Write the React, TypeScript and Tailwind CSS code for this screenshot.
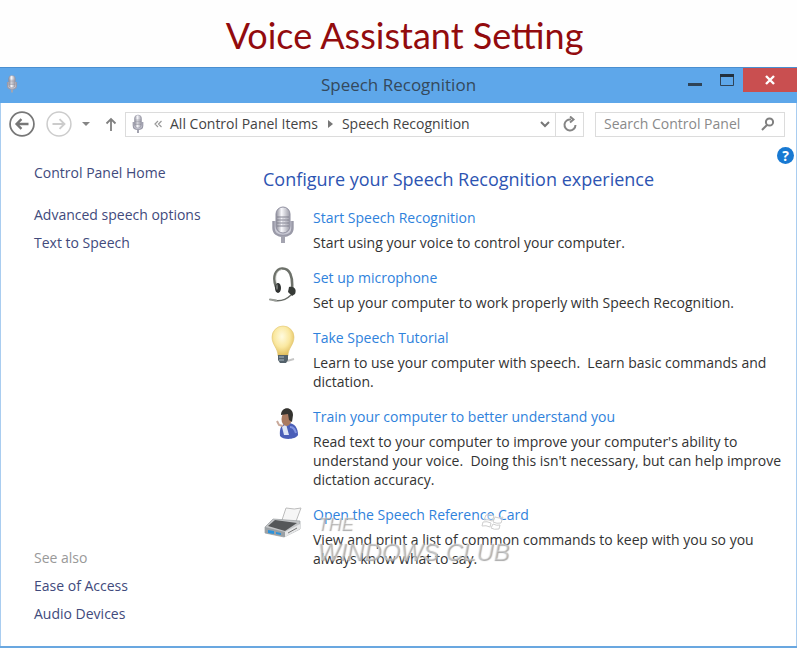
import type { ReactNode } from "react";

function MicIcon({ className }: { className: string }) {
  return (
    <svg className={className} viewBox="0 0 24 38" aria-hidden="true">
      <defs>
        <linearGradient id="micBody" x1="0" x2="1">
          <stop offset="0" stopColor="#8c8c98" />
          <stop offset="0.4" stopColor="#f8f8fc" />
          <stop offset="1" stopColor="#9a9aa6" />
        </linearGradient>
      </defs>
      <path d="M2.500 15v7c0 5 4 8 9.500 8s9.500-3 9.500-8v-7" fill="#c9c9d4" stroke="#9a9aa8" strokeWidth="2.400" />
      <path d="M12 30v7" stroke="#a4a4b0" strokeWidth="4" />
      <rect x="5" y="1" width="14" height="26" rx="7" fill="url(#micBody)" stroke="#9090a0" />
      <path d="M6 11h12M6 14h12M6 17h12M6 20h12" stroke="#80808e" strokeWidth="1" />
      <path d="M9 11v10M12 11v10M15 11v10" stroke="#b0b0bc" strokeWidth="0.6" />
    </svg>
  );
}

function HeadsetIcon() {
  return (
    <svg className="h-9 w-7" viewBox="0 0 28 36" aria-hidden="true">
      <path d="M7 20C3 9 7 2 13 1.500c8-.5 11 8 10 21" fill="none" stroke="#6d716a" strokeWidth="2.600" />
      <path d="M8 18C5 9 8 3 13 2.500" fill="none" stroke="#c9cbc5" strokeWidth="0.800" />
      <ellipse cx="9" cy="21" rx="3" ry="5" fill="#2f3231" />
      <ellipse cx="8" cy="20" rx="1" ry="3" fill="#777b77" />
      <path d="M20 20c5-1 8 2 6 7l-3 2-4-4z" fill="#363a37" />
      <path d="M22 28c-5 5-11 7-19 5" fill="none" stroke="#676b66" strokeWidth="1.400" />
      <path d="M1 32.500l6 1" stroke="#9b9e99" strokeWidth="2" strokeLinecap="round" />
    </svg>
  );
}

function BulbIcon() {
  return (
    <svg className="h-10 w-7" viewBox="0 0 28 40" aria-hidden="true">
      <defs>
        <radialGradient id="bulbGlass" cx="0.45" cy="0.35" r="0.65">
          <stop offset="0" stopColor="#fffbe0" />
          <stop offset="0.55" stopColor="#fae8a0" />
          <stop offset="1" stopColor="#dfbb59" />
        </radialGradient>
      </defs>
      <path d="M18 36l7-2" stroke="#c5c5c5" strokeWidth="2" />
      <path d="M9 31C9 23 3 20 3 12a11 11 0 0 1 22 0c0 8-6 11-6 19z" fill="url(#bulbGlass)" stroke="#e3c66f" strokeWidth="0.6" />
      <path d="M9 30h10v5l-2 3h-6l-2-3z" fill="#53616a" />
      <path d="M10 32h5M10 35h5" stroke="#a9b8c2" />
    </svg>
  );
}

function PersonIcon() {
  return (
    <svg className="ml-2 h-8 w-6" viewBox="0 0 24 32" aria-hidden="true">
      <path d="M5 28c-1-8 2-13 8-13 7 0 10 5 10 12-3 5-15 5-18 1z" fill="#4b5fb8" />
      <path d="M7 19l4-3 3 11H9z" fill="#dde5f5" />
      <path d="M15 19c4 0 5 3 6 6" stroke="#8294e0" strokeWidth="2" fill="none" />
      <ellipse cx="11.500" cy="11" rx="5" ry="7" fill="#a97a60" />
      <path d="M6 7c0-9 12-9 12 0l-1 7-3-2-1-6z" fill="#34332f" />
      <path d="M2 13l2 4 4 1" stroke="#c9a99a" strokeWidth="2" fill="none" />
    </svg>
  );
}

function PrinterIcon() {
  return (
    <svg className="h-8 w-10" viewBox="0 0 40 32" aria-hidden="true">
      <path d="M19 14L23 2q9 2 15 0l-6 16z" fill="#f6f6f6" stroke="#bcbcbc" />
      <path d="M2 21L10 13l27 2v8l-16 8L2 27z" fill="#c4c6c8" stroke="#9a9da0" strokeWidth="0.7" />
      <path d="M5 20l7-6 22 3-12 8z" fill="#555759" />
      <path d="M2 21l20 5v5L2 27z" fill="#9ba0a4" />
      <path d="M5 24l6 1v3l-6-1zM13 26l5 1v2l-5-1z" fill="#2b92db" />
      <path d="M22 26l15-8v5l-15 8z" fill="#e6e7e8" />
      <path d="M25 27l9-5" stroke="#777" />
    </svg>
  );
}

type Task = { title: string; text: string; icon: ReactNode };

const tasks: Task[] = [
  {
    title: "Start Speech Recognition",
    text: "Start using your voice to control your computer.",
    icon: <MicIcon className="h-[38px] w-6" />,
  },
  {
    title: "Set up microphone",
    text: "Set up your computer to work properly with Speech Recognition.",
    icon: <HeadsetIcon />,
  },
  {
    title: "Take Speech Tutorial",
    text: "Learn to use your computer with speech.\u00a0 Learn basic commands and dictation.",
    icon: <BulbIcon />,
  },
  {
    title: "Train your computer to better understand you",
    text: "Read text to your computer to improve your computer's ability to understand your voice.\u00a0 Doing this isn't necessary, but can help improve dictation accuracy.",
    icon: <PersonIcon />,
  },
  {
    title: "Open the Speech Reference Card",
    text: "View and print a list of common commands to keep with you so you always know what to say.",
    icon: <PrinterIcon />,
  },
];

function TitleBar() {
  return (
    <header className="grid h-9 grid-cols-[1fr_auto_1fr] border-t border-[#4a8fd0] bg-[#5ea7ea]">
      <div className="px-1.5 pt-[7px]">
        <MicIcon className="h-[18px] w-3" />
      </div>
      <h2 className="text-[17px] leading-[34px] text-[#34495c]">Speech Recognition</h2>
      <div className="flex items-start justify-end">
        <button aria-label="Minimize" className="flex h-6 w-8 items-center justify-center">
          <svg className="h-3 w-3.5" viewBox="0 0 14 12" aria-hidden="true">
            <path d="M0 10.500h14" stroke="#2f4357" strokeWidth="3" />
          </svg>
        </button>
        <button aria-label="Maximize" className="flex h-6 w-8 items-center justify-center">
          <svg className="h-3 w-3.5" viewBox="0 0 14 12" aria-hidden="true">
            <path d="M.5.500h13v11H.5z" fill="none" stroke="#2f4357" />
            <path d="M0 1.500h14" stroke="#22303e" strokeWidth="3" />
          </svg>
        </button>
        <button aria-label="Close" className="flex h-6 w-[54px] items-center justify-center bg-[#c94f50]">
          <svg className="h-2.5 w-2.5" viewBox="0 0 10 10" aria-hidden="true">
            <path d="M1 1l8 8M9 1l-8 8" stroke="#fff" strokeWidth="2.400" />
          </svg>
        </button>
      </div>
    </header>
  );
}

function Toolbar() {
  return (
    <nav aria-label="Location" className="flex items-center pt-2 pr-[11px] pl-2 text-sm text-[#444]">
      <button aria-label="Back">
        <svg className="size-[26px]" viewBox="0 0 24 24" fill="none" stroke="#777" aria-hidden="true">
          <circle cx="12" cy="12" r="11" strokeWidth="1.600" />
          <path d="M18 12H7M11.500 7.500L7 12l4.500 4.500" strokeWidth="2.200" />
        </svg>
      </button>
      <button aria-label="Forward" className="ml-[11px]">
        <svg className="size-[26px]" viewBox="0 0 24 24" fill="none" stroke="#ccc" aria-hidden="true">
          <circle cx="12" cy="12" r="11" strokeWidth="1.400" />
          <path d="M6 12h11M12.500 7.500L17 12l-4.500 4.500" strokeWidth="1.800" />
        </svg>
      </button>
      <button aria-label="Recent locations" className="ml-2.5">
        <svg className="h-2 w-2" viewBox="0 0 8 8" aria-hidden="true">
          <path d="M0 2h8L4 6z" fill="#858585" />
        </svg>
      </button>
      <button aria-label="Up" className="ml-[15px]">
        <svg className="h-4 w-3" viewBox="0 0 12 16" fill="none" stroke="#808080" strokeWidth="1.800" aria-hidden="true">
          <path d="M6 15V3M1.500 7.500L6 3l4.500 4.500" />
        </svg>
      </button>
      <div className="ml-2 flex h-[25px] min-w-0 flex-1 items-center border border-[#dcdcdc]">
        <MicIcon className="ml-1.5 h-5 w-3 shrink-0" />
        <svg className="ml-2.5 h-2 w-2 shrink-0" viewBox="0 0 8 8" fill="none" stroke="#999" aria-hidden="true">
          <path d="M4 1L1 4l3 3M7.500 1l-3 3 3 3" strokeWidth="1.200" />
        </svg>
        <a href="#items" className="ml-2 whitespace-nowrap">All Control Panel Items</a>
        <svg className="mx-2 h-2 w-2 shrink-0" viewBox="0 0 8 8" aria-hidden="true">
          <path d="M2 0l5 4-5 4z" fill="#777" />
        </svg>
        <a href="#speech" className="whitespace-nowrap">Speech Recognition</a>
        <button aria-label="Previous locations" className="mr-1 ml-auto">
          <svg className="h-3 w-3" viewBox="0 0 12 12" fill="none" stroke="#777" strokeWidth="2" aria-hidden="true">
            <path d="M2 4l4 4 4-4" />
          </svg>
        </button>
        <button aria-label="Refresh" className="flex h-full w-7 items-center justify-center border-l border-[#dcdcdc]">
          <svg className="size-4" viewBox="0 0 16 16" fill="none" stroke="#858585" strokeWidth="2" aria-hidden="true">
            <path d="M13.500 9A5.500 5.500 0 1 1 9 3.500" />
            <path d="M8 0.500l3.500 3L8 6.500" />
          </svg>
        </button>
      </div>
      <label className="ml-[11px] flex h-[25px] w-[190px] items-center border border-[#dcdcdc] px-2">
        <input
          type="search"
          aria-label="Search Control Panel"
          placeholder="Search Control Panel"
          className="min-w-0 flex-1 text-sm outline-none placeholder:text-[#8a8a8a]"
        />
        <svg className="size-4" viewBox="0 0 16 16" fill="none" stroke="#808080" strokeWidth="2" aria-hidden="true">
          <circle cx="9.500" cy="6" r="3.600" />
          <path d="M7 9L2 14" />
        </svg>
      </label>
    </nav>
  );
}

function Sidebar() {
  return (
    <aside className="flex w-[229px] shrink-0 flex-col text-sm leading-5 text-[#414a7c]">
      <a href="#home">Control Panel Home</a>
      <a href="#advanced" className="mt-[22px]">Advanced speech options</a>
      <a href="#tts" className="mt-2">Text to Speech</a>
      <div className="mt-auto flex flex-col gap-2 pb-[22px]">
        <span className="text-[#999]">See also</span>
        <a href="#ease">Ease of Access</a>
        <a href="#audio">Audio Devices</a>
      </div>
    </aside>
  );
}

function Watermark() {
  return (
    <div
      aria-hidden="true"
      className="pointer-events-none absolute top-3 left-1 w-[200px] font-['Liberation_Sans'] text-white/30 italic text-shadow-[1px_1px_1px_#a8a8a8]"
    >
      <p className="text-lg leading-5">THE</p>
      <p className="mt-1 text-2xl leading-7 whitespace-nowrap">WINDOWS CLUB</p>
      <svg className="absolute top-0 right-3 h-4 w-6" viewBox="0 0 24 16" fill="#fff" fillOpacity="0.4" stroke="#cecece" aria-hidden="true">
        <path d="M5 1q5-1 8 1l-2 5q-4-2-8-1zM14 3q4 2 8 0l-2 6q-4 1-8-1zM2 8q4-1 8 1l-1 4q-4-2-8-1zM12 10q4 2 7 1l-1 4q-5 1-8-1z" />
      </svg>
    </div>
  );
}

export default function App() {
  return (
    <div className="flex min-h-screen flex-col bg-[#fefefe] font-['Open_Sans','Noto_Sans',sans-serif]">
      <h1 className="h-[67px] pt-[11px] pl-3 text-center font-['Lato',sans-serif] text-4xl leading-12 text-[#920b0e]">
        Voice Assistant Setting
      </h1>
      <section className="flex flex-1 flex-col border-b-2 border-[#69a7e0]">
        <TitleBar />
        <div className="flex flex-1 flex-col border-x border-[#a9cdf0] bg-white">
          <Toolbar />
          <div className="flex flex-1 pt-[26px] pl-[33px]">
            <Sidebar />
            <main className="min-w-0 flex-1">
              <div className="flex items-start justify-between">
                <h3 className="text-lg leading-8 text-[#2d54b2]">Configure your Speech Recognition experience</h3>
                <button
                  aria-label="Help"
                  className="-mt-4 mr-0.5 size-[17px] shrink-0 rounded-full bg-[#1879d2] text-sm leading-4 font-bold text-white"
                >
                  ?
                </button>
              </div>
              <ul className="mt-2.5 flex flex-col gap-[13px] pr-1.5">
                {tasks.map((task, i) => (
                  <li key={task.title} className="flex text-sm">
                    <div className="flex h-10 w-[40px] shrink-0 items-center justify-center">{task.icon}</div>
                    <div className="relative ml-2.5">
                      <a href={`#task-${i}`} className="block leading-[25px] text-[#2f82dc]">{task.title}</a>
                      <p className="mt-[3px] leading-[19px] text-[#333]">{task.text}</p>
                      {i === tasks.length - 1 && <Watermark />}
                    </div>
                  </li>
                ))}
              </ul>
            </main>
          </div>
        </div>
      </section>
    </div>
  );
}
